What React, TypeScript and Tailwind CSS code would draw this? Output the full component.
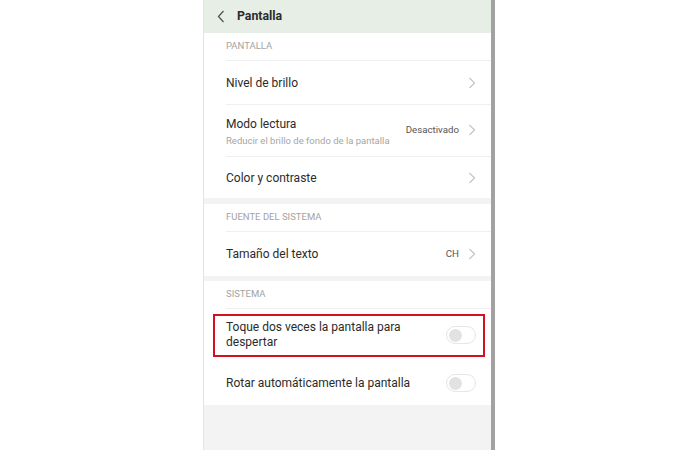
import React from "react";

function Chevron() {
    return (
        <svg width="8" height="12" viewBox="0 0 8 12" className="shrink-0">
            <path d="M1.5 1 L6.5 6 L1.5 11" fill="none" stroke="#c4c4c4" strokeWidth="1.2" />
        </svg>
    );
}

function Toggle() {
    return (
        <div className="w-[30px] h-[18px] rounded-full border border-[#e6e6e6] bg-white flex items-center px-[2px]">
            <div className="w-[13px] h-[13px] rounded-full bg-[#e2e2e2]" />
        </div>
    );
}

function SectionLabel({ text }: { text: string }) {
    return (
        <div className="h-[28px] ml-[22px] flex items-center border-b border-[#efefef]">
            <span className="text-[9.5px] text-[#a3a3a3]">{text}</span>
        </div>
    );
}

function Row({
    title,
    sub,
    value,
    h,
    last = false,
}: {
    title: string;
    sub?: string;
    value?: string;
    h: string;
    last?: boolean;
}) {
    return (
        <div className={`ml-[22px] pr-[15px] flex items-center justify-between ${h} ${last ? "" : "border-b border-[#efefef]"}`}>
            <div className={`flex flex-col ${sub ? "pt-[3px]" : ""}`}>
                <span className="text-[12px] text-[#2b2b2b]">{title}</span>
                {sub && <span className="text-[9.5px] text-[#a6a6a6] mt-[1px]">{sub}</span>}
            </div>
            <div className="flex items-center gap-[9px]">
                {value && <span className="text-[9.7px] text-[#555]">{value}</span>}
                <Chevron />
            </div>
        </div>
    );
}

export default function App(): JSX.Element {
    return (
        <div className="w-[700px] h-[450px] bg-white flex" style={{ fontFamily: "Roboto, 'Liberation Sans', sans-serif" }}>
            <div className="ml-[203px] w-[292px] h-full border-l border-[#e4e4e4] border-r-4 border-r-[#a2a2a2] flex flex-col bg-[#f3f3f3]">
                <div className="h-[33px] bg-[#e7eee6] flex items-center pl-[13px] shrink-0">
                    <svg width="8" height="13" viewBox="0 0 8 13">
                        <path d="M6.5 1 L1.5 6.5 L6.5 12" fill="none" stroke="#555" strokeWidth="1.3" />
                    </svg>
                    <span className="ml-[12px] text-[12.3px] font-bold text-[#2b2b2b]">Pantalla</span>
                </div>
                <div className="bg-white">
                    <SectionLabel text="PANTALLA" />
                    <Row title="Nivel de brillo" h="h-[44px]" />
                    <Row
                        title="Modo lectura"
                        sub="Reducir el brillo de fondo de la pantalla"
                        value="Desactivado"
                        h="h-[52px]"
                    />
                    <Row title="Color y contraste" h="h-[41px]" last />
                </div>
                <div className="h-[6px]" />
                <div className="bg-white">
                    <SectionLabel text="FUENTE DEL SISTEMA" />
                    <Row title="Tamaño del texto" value="CH" h="h-[44px]" last />
                </div>
                <div className="h-[5px]" />
                <div className="bg-white">
                    <SectionLabel text="SISTEMA" />
                    <div className="h-[52px] flex items-center pl-[9px] pr-[6px]">
                        <div className="w-full h-[43px] border-2 border-[#d4111e] flex items-center justify-between pl-[11px] pr-[7px]">
                            <span className="text-[12px] leading-[15px] text-[#2b2b2b] w-[190px]">
                                Toque dos veces la pantalla para despertar
                            </span>
                            <Toggle />
                        </div>
                    </div>
                    <div className="h-[44px] ml-[22px] pr-[15px] flex items-center justify-between">
                        <span className="text-[12px] text-[#2b2b2b]">Rotar automáticamente la pantalla</span>
                        <Toggle />
                    </div>
                </div>
            </div>
        </div>
    );
}
